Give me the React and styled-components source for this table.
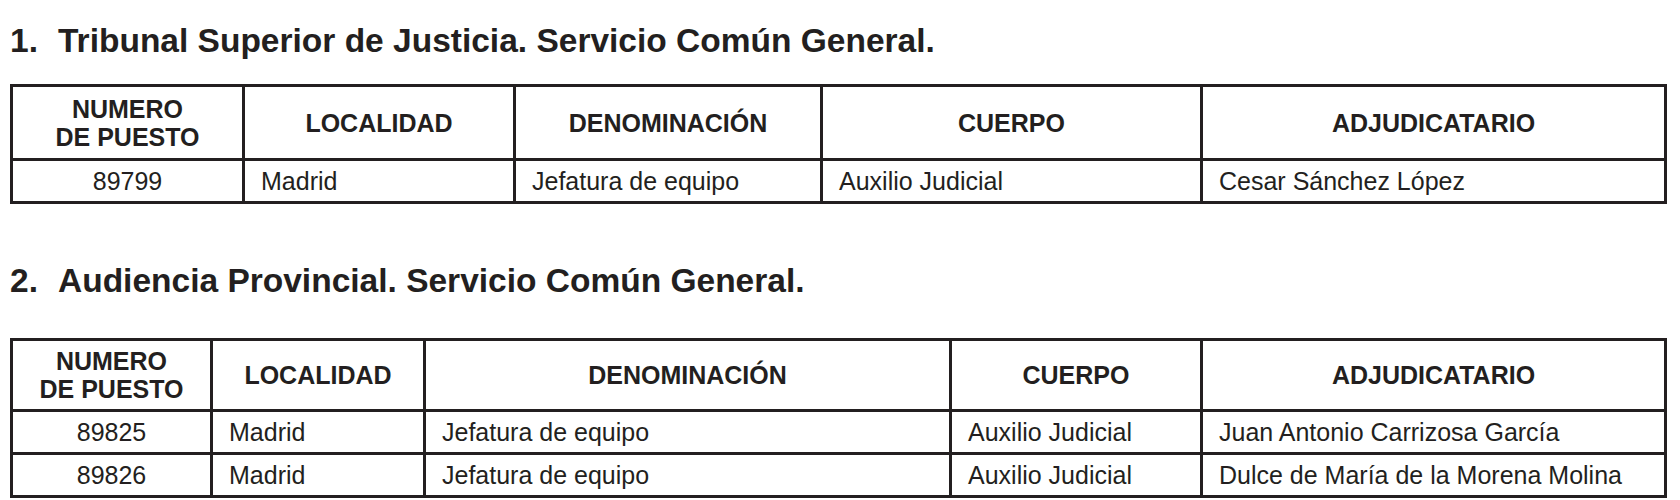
import styled, { createGlobalStyle } from 'styled-components'

const GlobalStyle = createGlobalStyle`
    body {
        margin: 0;
        background: #fff;
    }
`

const Page = styled.main`
    width: 1680px;
    padding: 22px 13px 0 10px;
    box-sizing: border-box;
    font-family: "Liberation Sans", Arial, Helvetica, sans-serif;
    color: #231f20;
`
const Section = styled.section`
    margin-bottom: ${p => p.$after}px;
`
const Heading = styled.h2`
    margin: 0 0 ${p => p.$gap}px 0;
    font-size: 33.5px;
    line-height: 38px;
    font-weight: 700;
`
const Num = styled.span`
    display: inline-block;
    width: 48px;
`
const Table = styled.div`
    display: grid;
    grid-template-columns: ${p => p.$cols};
    grid-template-rows: ${p => p.$head}px;
    grid-auto-rows: 40px;
    gap: 3px;
    padding: 3px;
    width: 1657px;
    box-sizing: border-box;
    background: #231f20;
`
const HeadCell = styled.div`
    display: flex;
    align-items: center;
    justify-content: center;
    text-align: center;
    background: #fff;
    font-size: 25px;
    font-weight: 700;
    line-height: 28px;
`
const Cell = styled.div`
    display: flex;
    align-items: center;
    justify-content: ${p => (p.$center ? 'center' : 'flex-start')};
    padding-left: ${p => (p.$center ? 0 : 16)}px;
    background: #fff;
    font-size: 25px;
    white-space: nowrap;
`

const headers = [
    <>NUMERO<br />DE PUESTO</>,
    'LOCALIDAD',
    'DENOMINACIÓN',
    'CUERPO',
    'ADJUDICATARIO',
]

const sections = [
    {
        num: '1.',
        title: 'Tribunal Superior de Justicia. Servicio Común General.',
        cols: '229px 268px 304px 377px 461px',
        head: 71,
        gap: 24,
        after: 58,
        rows: [
            ['89799', 'Madrid', 'Jefatura de equipo', 'Auxilio Judicial', 'Cesar Sánchez López'],
        ],
    },
    {
        num: '2.',
        title: 'Audiencia Provincial. Servicio Común General.',
        cols: '197px 210px 523px 248px 461px',
        head: 68,
        gap: 38,
        after: 0,
        rows: [
            ['89825', 'Madrid', 'Jefatura de equipo', 'Auxilio Judicial', 'Juan Antonio Carrizosa García'],
            ['89826', 'Madrid', 'Jefatura de equipo', 'Auxilio Judicial', 'Dulce de María de la Morena Molina'],
        ],
    },
]

export default function App() {
    return (
        <>
            <GlobalStyle />
            <Page>
                {sections.map(s => (
                    <Section key={s.num} $after={s.after}>
                        <Heading $gap={s.gap}>
                            <Num>{s.num}</Num>{s.title}
                        </Heading>
                        <Table $cols={s.cols} $head={s.head}>
                            {headers.map((h, i) => (
                                <HeadCell key={i}>{h}</HeadCell>
                            ))}
                            {s.rows.map(row =>
                                row.map((v, i) => (
                                    <Cell key={row[0] + i} $center={i === 0}>{v}</Cell>
                                ))
                            )}
                        </Table>
                    </Section>
                ))}
            </Page>
        </>
    )
}
